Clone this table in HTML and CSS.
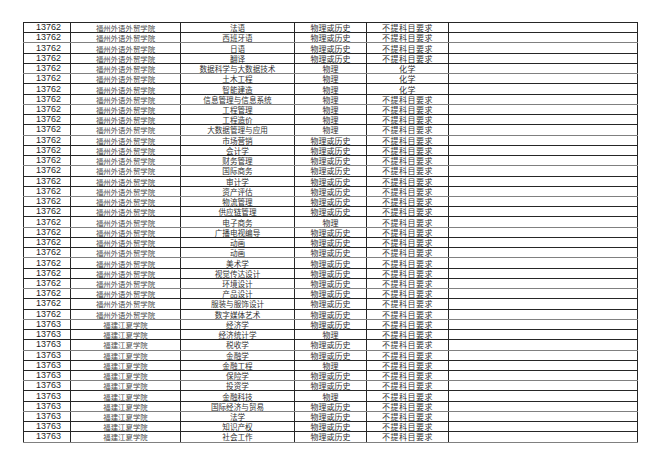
FILE: index.html
```html
<!DOCTYPE html>
<html lang="zh-CN">
<head>
<meta charset="utf-8">
<title>专业选考科目要求</title>
<link rel="stylesheet" href="styles.css">
</head>
<body>
<table class="sheet">
<colgroup>
<col class="c-code"><col class="c-school"><col class="c-major"><col class="c-first"><col class="c-second"><col class="c-blank">
</colgroup>
<tbody>
<tr><td class="code">13762</td><td class="school">福州外语外贸学院</td><td class="major">法语</td><td class="first">物理或历史</td><td class="second">不提科目要求</td><td></td></tr>
<tr><td class="code">13762</td><td class="school">福州外语外贸学院</td><td class="major">西班牙语</td><td class="first">物理或历史</td><td class="second">不提科目要求</td><td></td></tr>
<tr><td class="code">13762</td><td class="school">福州外语外贸学院</td><td class="major">日语</td><td class="first">物理或历史</td><td class="second">不提科目要求</td><td></td></tr>
<tr><td class="code">13762</td><td class="school">福州外语外贸学院</td><td class="major">翻译</td><td class="first">物理或历史</td><td class="second">不提科目要求</td><td></td></tr>
<tr><td class="code">13762</td><td class="school">福州外语外贸学院</td><td class="major">数据科学与大数据技术</td><td class="first">物理</td><td class="second">化学</td><td></td></tr>
<tr><td class="code">13762</td><td class="school">福州外语外贸学院</td><td class="major">土木工程</td><td class="first">物理</td><td class="second">化学</td><td></td></tr>
<tr><td class="code">13762</td><td class="school">福州外语外贸学院</td><td class="major">智能建造</td><td class="first">物理</td><td class="second">化学</td><td></td></tr>
<tr><td class="code">13762</td><td class="school">福州外语外贸学院</td><td class="major">信息管理与信息系统</td><td class="first">物理</td><td class="second">不提科目要求</td><td></td></tr>
<tr><td class="code">13762</td><td class="school">福州外语外贸学院</td><td class="major">工程管理</td><td class="first">物理</td><td class="second">不提科目要求</td><td></td></tr>
<tr><td class="code">13762</td><td class="school">福州外语外贸学院</td><td class="major">工程造价</td><td class="first">物理</td><td class="second">不提科目要求</td><td></td></tr>
<tr><td class="code">13762</td><td class="school">福州外语外贸学院</td><td class="major">大数据管理与应用</td><td class="first">物理</td><td class="second">不提科目要求</td><td></td></tr>
<tr><td class="code">13762</td><td class="school">福州外语外贸学院</td><td class="major">市场营销</td><td class="first">物理或历史</td><td class="second">不提科目要求</td><td></td></tr>
<tr><td class="code">13762</td><td class="school">福州外语外贸学院</td><td class="major">会计学</td><td class="first">物理或历史</td><td class="second">不提科目要求</td><td></td></tr>
<tr><td class="code">13762</td><td class="school">福州外语外贸学院</td><td class="major">财务管理</td><td class="first">物理或历史</td><td class="second">不提科目要求</td><td></td></tr>
<tr><td class="code">13762</td><td class="school">福州外语外贸学院</td><td class="major">国际商务</td><td class="first">物理或历史</td><td class="second">不提科目要求</td><td></td></tr>
<tr><td class="code">13762</td><td class="school">福州外语外贸学院</td><td class="major">审计学</td><td class="first">物理或历史</td><td class="second">不提科目要求</td><td></td></tr>
<tr><td class="code">13762</td><td class="school">福州外语外贸学院</td><td class="major">资产评估</td><td class="first">物理或历史</td><td class="second">不提科目要求</td><td></td></tr>
<tr><td class="code">13762</td><td class="school">福州外语外贸学院</td><td class="major">物流管理</td><td class="first">物理或历史</td><td class="second">不提科目要求</td><td></td></tr>
<tr><td class="code">13762</td><td class="school">福州外语外贸学院</td><td class="major">供应链管理</td><td class="first">物理或历史</td><td class="second">不提科目要求</td><td></td></tr>
<tr><td class="code">13762</td><td class="school">福州外语外贸学院</td><td class="major">电子商务</td><td class="first">物理</td><td class="second">不提科目要求</td><td></td></tr>
<tr><td class="code">13762</td><td class="school">福州外语外贸学院</td><td class="major">广播电视编导</td><td class="first">物理或历史</td><td class="second">不提科目要求</td><td></td></tr>
<tr><td class="code">13762</td><td class="school">福州外语外贸学院</td><td class="major">动画</td><td class="first">物理或历史</td><td class="second">不提科目要求</td><td></td></tr>
<tr><td class="code">13762</td><td class="school">福州外语外贸学院</td><td class="major">动画</td><td class="first">物理或历史</td><td class="second">不提科目要求</td><td></td></tr>
<tr><td class="code">13762</td><td class="school">福州外语外贸学院</td><td class="major">美术学</td><td class="first">物理或历史</td><td class="second">不提科目要求</td><td></td></tr>
<tr><td class="code">13762</td><td class="school">福州外语外贸学院</td><td class="major">视觉传达设计</td><td class="first">物理或历史</td><td class="second">不提科目要求</td><td></td></tr>
<tr><td class="code">13762</td><td class="school">福州外语外贸学院</td><td class="major">环境设计</td><td class="first">物理或历史</td><td class="second">不提科目要求</td><td></td></tr>
<tr><td class="code">13762</td><td class="school">福州外语外贸学院</td><td class="major">产品设计</td><td class="first">物理或历史</td><td class="second">不提科目要求</td><td></td></tr>
<tr><td class="code">13762</td><td class="school">福州外语外贸学院</td><td class="major">服装与服饰设计</td><td class="first">物理或历史</td><td class="second">不提科目要求</td><td></td></tr>
<tr><td class="code">13762</td><td class="school">福州外语外贸学院</td><td class="major">数字媒体艺术</td><td class="first">物理或历史</td><td class="second">不提科目要求</td><td></td></tr>
<tr><td class="code">13763</td><td class="school">福建江夏学院</td><td class="major">经济学</td><td class="first">物理或历史</td><td class="second">不提科目要求</td><td></td></tr>
<tr><td class="code">13763</td><td class="school">福建江夏学院</td><td class="major">经济统计学</td><td class="first">物理</td><td class="second">不提科目要求</td><td></td></tr>
<tr><td class="code">13763</td><td class="school">福建江夏学院</td><td class="major">税收学</td><td class="first">物理或历史</td><td class="second">不提科目要求</td><td></td></tr>
<tr><td class="code">13763</td><td class="school">福建江夏学院</td><td class="major">金融学</td><td class="first">物理或历史</td><td class="second">不提科目要求</td><td></td></tr>
<tr><td class="code">13763</td><td class="school">福建江夏学院</td><td class="major">金融工程</td><td class="first">物理</td><td class="second">不提科目要求</td><td></td></tr>
<tr><td class="code">13763</td><td class="school">福建江夏学院</td><td class="major">保险学</td><td class="first">物理或历史</td><td class="second">不提科目要求</td><td></td></tr>
<tr><td class="code">13763</td><td class="school">福建江夏学院</td><td class="major">投资学</td><td class="first">物理或历史</td><td class="second">不提科目要求</td><td></td></tr>
<tr><td class="code">13763</td><td class="school">福建江夏学院</td><td class="major">金融科技</td><td class="first">物理</td><td class="second">不提科目要求</td><td></td></tr>
<tr><td class="code">13763</td><td class="school">福建江夏学院</td><td class="major">国际经济与贸易</td><td class="first">物理或历史</td><td class="second">不提科目要求</td><td></td></tr>
<tr><td class="code">13763</td><td class="school">福建江夏学院</td><td class="major">法学</td><td class="first">物理或历史</td><td class="second">不提科目要求</td><td></td></tr>
<tr><td class="code">13763</td><td class="school">福建江夏学院</td><td class="major">知识产权</td><td class="first">物理或历史</td><td class="second">不提科目要求</td><td></td></tr>
<tr><td class="code">13763</td><td class="school">福建江夏学院</td><td class="major">社会工作</td><td class="first">物理或历史</td><td class="second">不提科目要求</td><td></td></tr>
</tbody>
</table>
</body>
</html>
```

FILE: styles.css
```css
html, body {
  margin: 0;
  padding: 0;
  background: #ffffff;
}

body {
  padding: 22px 0 0 23px;
  font-family: "Noto Sans CJK SC", "Noto Sans", sans-serif;
  color: #333333;
}

.sheet {
  border-collapse: collapse;
  table-layout: fixed;
  width: 614px;
}

.c-code { width: 47px; }
.c-school { width: 110px; }
.c-major { width: 114px; }
.c-first { width: 72px; }
.c-second { width: 82px; }
.c-blank { width: 189px; }

.sheet td {
  border: 1px solid #262626;
  height: 9.24px;
  padding: 0;
  text-align: center;
  vertical-align: middle;
  line-height: 9px;
  white-space: nowrap;
  overflow: hidden;
  font-weight: 400;
}

.sheet tr:nth-child(3n+2) td {
  border-bottom-color: #808080;
}

.code {
  font-family: "Liberation Sans", Arial, sans-serif;
  font-size: 9px;
  color: #1e1e1e;
  padding-left: 3px !important;
}

.school {
  font-size: 7.4px;
  color: #4a4a4a;
}

.major {
  font-size: 7.6px;
}

.first {
  font-size: 8px;
}

.second {
  font-size: 8px;
  letter-spacing: 0.5px;
}
```
